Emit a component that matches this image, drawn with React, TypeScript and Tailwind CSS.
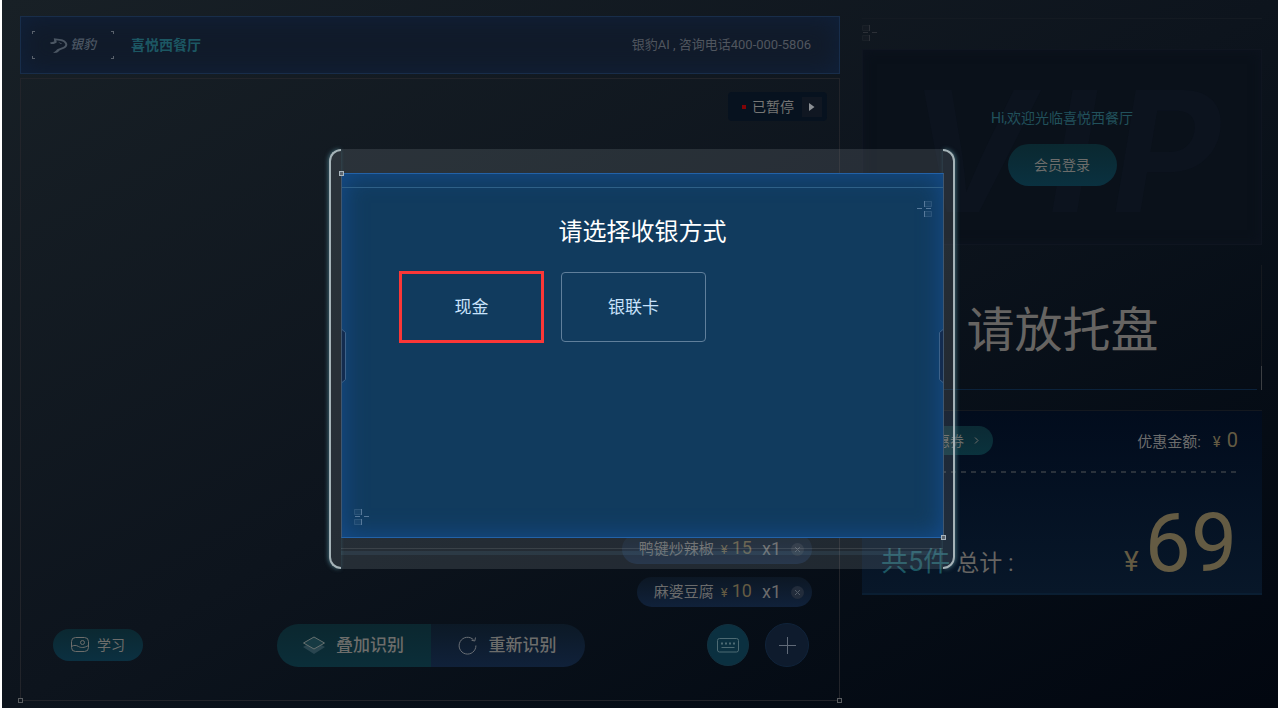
import type { ReactNode } from 'react';

const dishes = [
  { name: '鸭键炒辣椒', price: 15, count: 1 },
  { name: '麻婆豆腐', price: 10, count: 1 },
];

function Crosshair({ className = '' }: { className?: string }) {
  return (
    <svg className={className} width="16" height="16" viewBox="0 0 16 16" fill="none" aria-hidden="true">
      <path d="M.5 .5h7v5h-7zM.5 10.500h7v5h-7z" fill="currentColor" fillOpacity="0.15" stroke="currentColor" strokeOpacity="0.35" />
      <path d="M7.500 0v6M7.500 10v6M1 7.500h5M10 7.500h5" stroke="currentColor" />
    </svg>
  );
}

function Logo() {
  return (
    <div className="relative flex h-7 w-[82px] items-center justify-center gap-0.5 text-[#4b5663]">
      <i className="absolute top-0 left-0 size-[3px] border-t border-l border-[#59616c]" />
      <i className="absolute top-0 right-0 size-[3px] border-t border-r border-[#59616c]" />
      <i className="absolute bottom-0 left-0 size-[3px] border-b border-l border-[#59616c]" />
      <i className="absolute right-0 bottom-0 size-[3px] border-r border-b border-[#59616c]" />
      <svg width="18" height="15" viewBox="0 0 18 15" fill="currentColor" aria-hidden="true">
        <path d="M0 4.600L4.200 3.600L3.800 .2L11.500 1.300C14.500 2.100 17.300 4 17.300 6.600C17.300 9.400 14 11.300 10.500 11.900C9 12.200 8.200 14.400 6.500 14.800L3 15L6.200 12.600C7 11 8.500 10.500 10.500 10C13.500 9.300 15.300 8.200 15.300 6.600C15.300 4.800 13 3.400 10.800 2.900L6.300 2.200L6.800 4.300C5.500 5.800 3.500 6.300 .8 6z" />
        <path d="M8 3.800l4 1.600-1 .8z" />
      </svg>
      <span className="text-[13px] leading-5 font-medium italic">银豹</span>
    </div>
  );
}

function Header() {
  return (
    <header className="flex h-[58px] items-center border border-[#182d4a] bg-[#111b2a] pr-7 pl-[11px] shadow-[inset_0_0_24px_#10213c]">
      <Logo />
      <h1 className="ml-[17px] text-sm leading-5 font-bold text-[#1c5763]">喜悦西餐厅</h1>
      <p className="ml-auto text-[13px] leading-5 text-[#50565f]">银豹AI , 咨询电话400-000-5806</p>
    </header>
  );
}

function DishPill({ name, price, count }: { name: string; price: number; count: number }) {
  return (
    <li className="flex h-[30px] items-center rounded-full bg-linear-to-b from-[#0c1724] to-[#10213a] pr-2 pl-[17px] text-[#6b6b6b]">
      <span className="text-[15px] leading-5">{name}</span>
      <span className="ml-[7px] flex items-baseline gap-1 text-lg leading-5 text-[#645b43]">
        <span className="text-[13px] leading-5">¥</span>
        {price}
      </span>
      <span className="ml-2.5 text-lg leading-5">x{count}</span>
      <button type="button" aria-label="删除" className="ml-2.5 flex size-[13px] items-center justify-center rounded-full bg-[#222c3b]">
        <svg width="7" height="7" viewBox="0 0 7 7" stroke="#525b66" aria-hidden="true">
          <path d="M1 1l5 5M6 1L1 6" />
        </svg>
      </button>
    </li>
  );
}

function Toolbar() {
  return (
    <div className="mt-4 grid grid-cols-[1fr_auto_1fr] items-center pr-[30px] pl-8 text-[#6d6d6b]">
      <button type="button" className="flex h-8 w-[90px] items-center justify-center gap-2 rounded-full bg-linear-to-b from-[#0b2831] to-[#0b3041] text-sm leading-5">
        <svg width="18" height="16" viewBox="0 0 18 16" fill="none" stroke="currentColor" aria-hidden="true">
          <rect x=".5" y=".5" width="17" height="14" rx="4" />
          <circle cx="11.5" cy="5.5" r="2" />
          <path d="M.5 9.500C3 8 5 8 7.500 9.500S13 11 17.500 8.500" />
        </svg>
        学习
      </button>

      <div className="flex h-[43px] overflow-hidden rounded-full text-[17px] leading-6 font-medium">
        <button type="button" className="flex w-[154px] items-center justify-center gap-2.5 bg-linear-to-b from-[#0b272f] to-[#0b2e39] pr-0.5">
          <svg width="24" height="18" viewBox="0 0 24 18" fill="none" aria-hidden="true">
            <path d="M1 11l11-6 11 6-11 7z" fill="#29454f" />
            <path d="M1.500 7L12 1l10.500 6L12 13z" stroke="#66706f" fill="#173a43" />
          </svg>
          叠加识别
        </button>
        <button type="button" className="flex w-[154px] items-center justify-center gap-3 bg-linear-to-b from-[#0c1926] to-[#10213a] pr-0.5">
          <svg width="19" height="19" viewBox="0 0 19 19" fill="none" stroke="#6b7076" aria-hidden="true">
            <path d="M15.500 3.800A8.400 8.400 0 1 0 17.900 9.500" />
            <path d="M17.500 1.500L16.800 5L13.500 4.200" />
          </svg>
          重新识别
        </button>
      </div>

      <div className="flex items-center justify-end gap-4">
        <button type="button" aria-label="键盘" className="flex size-[42px] items-center justify-center rounded-full border border-[#12303f] bg-[#0b3040]">
          <svg width="22" height="15" viewBox="0 0 22 15" fill="none" stroke="#4d6a73" aria-hidden="true">
            <rect x=".5" y=".5" width="21" height="13.500" rx="2" />
            <path d="M4 5.500h14" strokeWidth="2" strokeDasharray="2 2" />
            <path d="M4.500 9.500h13" />
          </svg>
        </button>
        <button type="button" aria-label="添加" className="flex size-11 items-center justify-center rounded-full border border-[#10233a] bg-[#0e1b2d]">
          <svg width="17" height="17" viewBox="0 0 17 17" stroke="#606a78" aria-hidden="true">
            <path d="M8.500 0v17M0 8.500h17" />
          </svg>
        </button>
      </div>
    </div>
  );
}

function Recognition() {
  return (
    <section className="relative flex flex-1 flex-col border border-[#22242a] pb-[33px]">
      <i className="absolute -bottom-[3px] -left-[3px] size-[5px] border border-[#5a5d60] bg-[#10161e]" />
      <i className="absolute -right-[3px] -bottom-[3px] size-[5px] border border-[#5a5d60] bg-[#0b111a]" />
      <div className="mt-[13px] mr-3 flex h-[29px] items-center self-end rounded-sm bg-[#07121f] pr-[5px] pl-3.5">
        <i className="size-1 bg-[#800407]" />
        <span className="ml-1.5 text-sm leading-5 text-[#767674]">已暂停</span>
        <button type="button" aria-label="继续" className="ml-2 flex size-5 items-center justify-center bg-[#101722]">
          <svg width="6" height="8" viewBox="0 0 6 8" fill="#8c9095" aria-hidden="true">
            <path d="M0 0l5.500 4L0 8z" />
          </svg>
        </button>
      </div>
      <ul className="mt-auto mr-[27px] flex flex-col items-end gap-[13px]">
        {dishes.map((dish) => (
          <DishPill key={dish.name} {...dish} />
        ))}
      </ul>
      <Toolbar />
    </section>
  );
}

function MemberCard() {
  return (
    <section className="border-t border-[#141a22] pt-1.5">
      <Crosshair className="text-[#2c3037]" />
      <div className="relative mt-2 flex h-[196px] flex-col items-center border border-[#0f1520] bg-[#0a111a] pt-[58px] shadow-[inset_0_0_12px_#0d131f]">
        <div aria-hidden="true" className="absolute inset-0 flex items-center justify-center gap-4 pt-2 pl-1 font-['Inter',sans-serif] text-[168px] leading-none font-bold text-[#0c131e] italic select-none">
          <span>V</span>
          <span>I</span>
          <span>P</span>
        </div>
        <p className="relative text-sm leading-5 text-[#21515c]">Hi,欢迎光临喜悦西餐厅</p>
        <button type="button" className="relative mt-4 h-[42px] w-[109px] rounded-full bg-linear-to-b from-[#0a2830] to-[#0a3140] text-sm leading-5 text-[#6d6d6b]">
          会员登录
        </button>
      </div>
    </section>
  );
}

function TrayPrompt() {
  return (
    <section className="relative mt-5 flex h-[125px] items-center justify-center border-r border-[#15191f] pt-1.5 pl-0.5">
      <i className="absolute right-1 bottom-0 left-0 h-px bg-[#0b223b]" />
      <i className="absolute -right-px bottom-0 h-6 w-px bg-[#3c3f43]" />
      <p className="text-5xl leading-[60px] text-[#666462]">请放托盘</p>
    </section>
  );
}

function Checkout() {
  return (
    <section className="mt-5 h-[185px] border-t border-b-2 border-t-[#14181f] border-b-[#0a1e32] bg-linear-to-b from-[#020c1d] to-[#081729] px-[19px] pt-[15px]">
      <div className="flex items-center justify-between">
        <button type="button" className="flex h-[29px] w-28 items-center justify-end gap-2.5 rounded-full bg-linear-to-b from-[#0b2a34] to-[#0a323d] pr-3.5 text-sm leading-5 text-[#6d6d6b]">
          优惠券
          <svg width="5" height="7" viewBox="0 0 5 7" fill="none" stroke="currentColor" aria-hidden="true">
            <path d="M1 .5l3 3-3 3" />
          </svg>
        </button>
        <p className="flex items-baseline pr-[5px] text-[15px] leading-5 text-[#6d6d6d]">
          优惠金额:
          <span className="ml-3 text-[15px] text-[#645b43]">¥</span>
          <span className="ml-1.5 text-xl leading-5 text-[#645b43]">0</span>
        </p>
      </div>
      <div className="mt-4 mr-1.5 h-0.5 bg-[repeating-linear-gradient(to_right,#2a323c_0_5px,transparent_5px_10px)]" />
      <div className="mt-[29px] flex items-baseline pr-1.5">
        <strong className="text-[27px] leading-8 font-normal text-[#1c5763]">共5件</strong>
        <span className="ml-1.5 text-[23px] leading-8 text-[#666462]">总计 :</span>
        <span className="ml-auto text-[28px] leading-8 text-[#645b43]">¥</span>
        <span className="ml-1.5 text-[82px] leading-[82px] text-[#645b43]">69</span>
      </div>
    </section>
  );
}

function Frame({ children }: { children: ReactNode }) {
  return (
    <div className="relative w-[626px] rounded-xl bg-[#8c969a]/20 pt-6 pr-[11px] pb-[31px] pl-3">
      <i className="absolute inset-y-0 left-0 w-3 rounded-l-xl border-y-2 border-l-2 border-[#a5b3b8] shadow-[-1px_0_4px_#3d6470]" />
      <i className="absolute inset-y-0 right-0 w-3 rounded-r-xl border-y-2 border-r-2 border-[#a5b3b8] shadow-[1px_0_4px_#3d6470]" />
      {children}
      <i className="absolute right-3 bottom-5 left-3 h-px bg-white/10" />
      <i className="absolute right-3 bottom-3.5 left-3 h-1 bg-[#5b8fa6]/15" />
    </div>
  );
}

function PaymentDialog() {
  return (
    <div className="fixed inset-0 flex items-center justify-center pt-2.5 pl-1.5">
      <Frame>
        <div
          role="dialog"
          aria-labelledby="payment-title"
          className="relative min-h-[365px] border border-x-[#40566e] border-y-[#2362a8] bg-[#113b5e] px-[57px] pt-10 shadow-[inset_0_0_24px_#154d8f]"
        >
          <i className="absolute inset-x-0 top-[13px] h-px bg-[#2f6088]" />
          <i className="absolute -top-[3px] -left-[3px] size-[5px] border border-[#a8b4bc] bg-[#5c6670]" />
          <i className="absolute -right-[3px] -bottom-[3px] size-[5px] border border-[#a8b4bc] bg-[#5c6670]" />
          <Crosshair className="absolute top-[27px] right-[11px] -scale-x-100 text-[#57799a]" />
          <Crosshair className="absolute bottom-3 left-3 text-[#57799a]" />
          <svg className="absolute top-[155px] left-0" width="5" height="54" viewBox="0 0 5 54" fill="#132c50" stroke="#3e6289" aria-hidden="true">
            <path d="M0 .5l3.500 3v47l-3.500 3" />
          </svg>
          <svg className="absolute top-[155px] right-0 -scale-x-100" width="5" height="54" viewBox="0 0 5 54" fill="#132c50" stroke="#3e6289" aria-hidden="true">
            <path d="M0 .5l3.500 3v47l-3.500 3" />
          </svg>
          <h2 id="payment-title" className="text-center text-2xl leading-9 text-white">
            请选择收银方式
          </h2>
          <div className="mt-[21px] flex items-center gap-[17px] text-[17px] leading-6 text-[#c8e2fb]">
            <button type="button" className="h-[72px] w-[145px] border-3 border-[#fb3737]">现金</button>
            <button type="button" className="h-[70px] w-[145px] rounded border border-[#607f9b]">银联卡</button>
          </div>
        </div>
      </Frame>
    </div>
  );
}

export default function App() {
  return (
    <div className="flex min-h-screen gap-[22px] border-l-2 border-white bg-linear-to-br from-[#182026] via-[#0d141d] to-[#020710] pt-4 pr-4 pb-[7px] pl-[18px] font-['Roboto','Noto_Sans_CJK_SC',sans-serif]">
      <main className="flex min-w-0 flex-1 flex-col gap-1">
        <Header />
        <Recognition />
      </main>
      <aside className="w-[400px] shrink-0 pt-0.5">
        <MemberCard />
        <TrayPrompt />
        <Checkout />
      </aside>
      <PaymentDialog />
    </div>
  );
}
